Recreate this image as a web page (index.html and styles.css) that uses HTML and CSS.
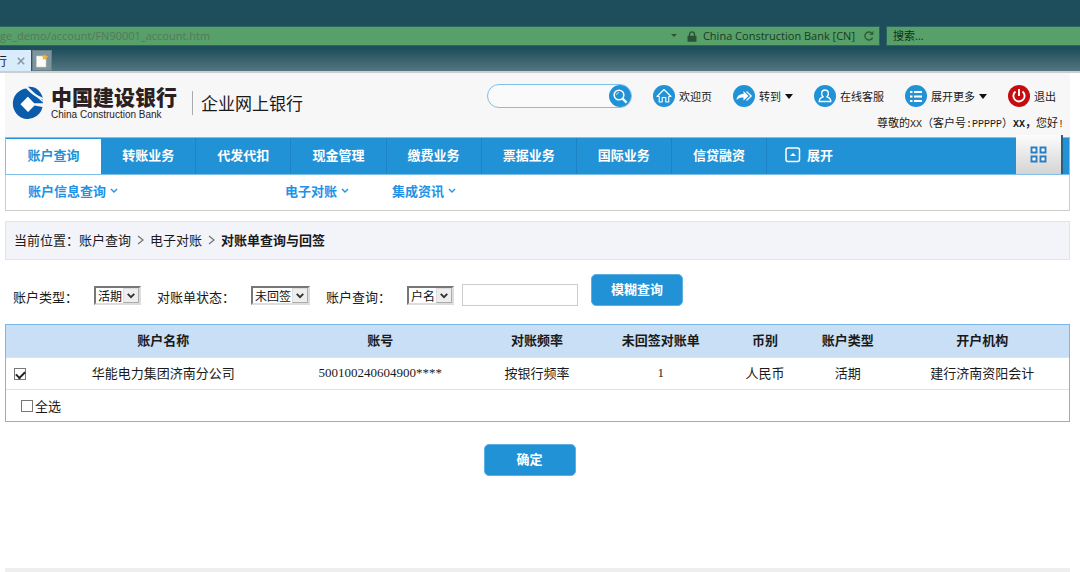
FILE: index.html
```html
<!DOCTYPE html>
<html lang="zh-CN">
<head>
<meta charset="utf-8">
<title>对账单查询与回签</title>
<link rel="stylesheet" href="styles.css">
</head>
<body>
<div class="browser">
  <div class="address-row">
    <div class="address">
      <span class="url">ge_demo/account/FN90001_account.htm</span>
      <svg class="drop" viewBox="0 0 6 4" width="6" height="4" aria-hidden="true"><path d="M0 0h6L3 3z"/></svg>
      <svg class="lock" viewBox="0 0 10 11" width="10" height="11" aria-hidden="true"><path d="M2.5 5V3.4a2.5 2.5 0 0 1 5 0V5" fill="none" stroke-width="1.4"/><rect x="0.5" y="4.8" width="9" height="6" rx="0.6" stroke="none"/></svg>
      <span class="owner">China Construction Bank [CN]</span>
      <svg class="reload" viewBox="0 0 12 12" width="12" height="12" aria-hidden="true"><path d="M9.6 7.6A4 4 0 1 1 8.6 3" fill="none" stroke-width="1.5"/><path d="M10.4 0.8v4.2H6.4z" stroke="none"/></svg>
    </div>
    <div class="finder">搜索...</div>
  </div>
  <div class="tab-row">
    <div class="tab"><span>行</span>
      <svg viewBox="0 0 8 8" width="8" height="8" aria-hidden="true"><path d="M0.8 0.8l6.4 6.4M7.2 0.8L0.8 7.2" fill="none" stroke="#8a959e" stroke-width="1.5"/></svg>
    </div>
    <button class="new-tab" type="button" aria-label="新建选项卡">
      <svg viewBox="0 0 14 14" width="14" height="14" aria-hidden="true"><path d="M1.5 2h8L11 4.500V13H1.500z" fill="#fbfbf9" stroke="#d5d2cb" stroke-width="0.6"/><path d="M10 0l1 2 2.300.6-2 1.400.1 2.300-1.900-1.300-2 .8.7-2.200L7 1.800l2.200 0z" fill="#f5b52e"/></svg>
    </button>
  </div>
</div>

<div class="page">
  <header class="header">
    <div class="brand">
      <svg class="logo" viewBox="0 0 32 34" width="32" height="34" aria-hidden="true">
        <path d="M14 2.500A15 15.300 0 1 0 30.500 21L22.500 19.500 16 26 8.500 18.200 16 10.500 18.500 13 23 11.500z" fill="#0a5cab"/>
        <path d="M15.500 1C21 0 28 2.500 30.800 11.800C25 9.500 19 5.500 15.500 1z" fill="#0a5cab"/>
        <path d="M14 2.600C18 7.500 24 11.500 30.800 13.800V17.200H21.800L16 11z" fill="#0a5cab"/>
        <path d="M16 11l7 7.200-7 7.200-7-7.200z" fill="#fff"/>
        <path d="M15.500 1.200C19.500 5.500 25 10 30.800 15.500" fill="none" stroke="#f7f7f7" stroke-width="1.300"/>
      </svg>
      <div class="brand-name"><strong>中国建设银行</strong><span>China Construction Bank</span></div>
      <div class="product">企业网上银行</div>
    </div>
    <div class="tools">
      <div class="tool-row">
        <form class="search">
          <input type="text" aria-label="搜索">
          <button type="button" aria-label="搜索">
            <svg viewBox="0 0 22 22" width="22" height="22" aria-hidden="true"><circle cx="10" cy="10" r="4.800" fill="none" stroke="#fff" stroke-width="1.600"/><path d="M13.600 13.600l4 4" stroke="#fff" stroke-width="2.200"/><path d="M7.500 10A2.600 2.600 0 0 1 10 7.500" fill="none" stroke="#b9def6"/></svg>
          </button>
        </form>
        <a href="#"><svg viewBox="0 0 22 22" width="22" height="22" aria-hidden="true"><circle cx="11" cy="11" r="11" fill="#2292d6"/><path d="M4 11.500L11 4.500l7 7h-2.200V17h-3v-4.500H9.200V17h-3v-5.500z" fill="none" stroke="#fff" stroke-width="1.100" stroke-linejoin="round"/></svg>欢迎页</a>
        <a href="#"><svg viewBox="0 0 22 22" width="22" height="22" aria-hidden="true"><circle cx="11" cy="11" r="11" fill="#2292d6"/><path d="M3.500 15c.5-4 3-6 7-6V6l5 5-5 4.500V12.500c-3 0-5 .5-7 2.500z" fill="#fff"/><path d="M13.500 6.500L18.200 11l-4.700 4.500" fill="none" stroke="#fff" stroke-width="1.300"/></svg>转到<i class="caret"></i></a>
        <a href="#"><svg viewBox="0 0 22 22" width="22" height="22" aria-hidden="true"><circle cx="11" cy="11" r="11" fill="#2292d6"/><path d="M9 11.800C6.500 9 7.500 5 11 5s4.500 4 2 6.800c2.500.8 3.800 2 3.800 4.700H5.200c0-2.700 1.300-3.900 3.800-4.700z" fill="none" stroke="#fff" stroke-width="1.300"/></svg>在线客服</a>
        <a href="#"><svg viewBox="0 0 22 22" width="22" height="22" aria-hidden="true"><circle cx="11" cy="11" r="11" fill="#2292d6"/><path d="M5 7h2.500M5 11.500h2.500M5 16h2.500M9 7h8M9 11.500h8M9 16h8" stroke="#fff" stroke-width="2.200"/></svg>展开更多<i class="caret"></i></a>
        <a href="#"><svg viewBox="0 0 22 22" width="22" height="22" aria-hidden="true"><circle cx="11" cy="11" r="11" fill="#c40c10"/><path d="M7.500 6.500a5.600 5.600 0 1 0 7 0M11 4v7" fill="none" stroke="#fff" stroke-width="1.900"/></svg>退出</a>
      </div>
      <div class="greeting">尊敬的<span class="mono">XX</span>（客户号<span class="mono">:PPPPP</span>）<b><span class="mono">XX</span>，</b>您好<span class="mono">!</span></div>
    </div>
  </header>

  <nav class="nav">
    <div class="nav-main">
      <div class="nav-tabs">
        <a class="active" href="#">账户查询</a><a href="#">转账业务</a><a href="#">代发代扣</a><a href="#">现金管理</a><a href="#">缴费业务</a><a href="#">票据业务</a><a href="#">国际业务</a><a href="#">信贷融资</a>
      </div>
      <a class="expand" href="#"><svg viewBox="0 0 16 16" width="16" height="16" aria-hidden="true"><rect x="1" y="1" width="13.500" height="13.500" rx="2" fill="none" stroke="#fff" stroke-width="1.500"/><path d="M5 9h6L8 6z" fill="#fff"/></svg>展开</a>
      <button class="apps" type="button" aria-label="全部应用">
        <svg viewBox="0 0 17 17" width="17" height="17" aria-hidden="true"><path d="M1.500 1.500h5v5h-5zM10.500 1.500h5v5h-5zM1.500 10.500h5v5h-5zM10.500 10.500h5v5h-5z" fill="#fff" stroke="#2a7dc0" stroke-width="1.900"/></svg>
      </button>
    </div>
    <div class="nav-sub">
      <a class="wide" href="#">账户信息查询<svg viewBox="0 0 8 6" width="8" height="6" aria-hidden="true"><path d="M1 1l3 3 3-3"/></svg></a>
      <a href="#">电子对账<svg viewBox="0 0 8 6" width="8" height="6" aria-hidden="true"><path d="M1 1l3 3 3-3"/></svg></a>
      <a href="#">集成资讯<svg viewBox="0 0 8 6" width="8" height="6" aria-hidden="true"><path d="M1 1l3 3 3-3"/></svg></a>
    </div>
  </nav>

  <div class="crumbs">
    <span>当前位置：</span><span>账户查询</span>
    <svg viewBox="0 0 7 10" width="7" height="10" aria-hidden="true"><path d="M1 1l5 4-5 4"/></svg>
    <span>电子对账</span>
    <svg viewBox="0 0 7 10" width="7" height="10" aria-hidden="true"><path d="M1 1l5 4-5 4"/></svg>
    <b>对账单查询与回签</b>
  </div>

  <form class="filters">
    <label for="type">账户类型：</label>
    <span class="pick"><select id="type"><option>活期</option></select><svg viewBox="0 0 16 16" width="16" height="16" aria-hidden="true"><path d="M4 6l4 4 4-4"/></svg></span>
    <label for="state">对账单状态：</label>
    <span class="pick pick-wide"><select id="state"><option>未回签</option></select><svg viewBox="0 0 16 16" width="16" height="16" aria-hidden="true"><path d="M4 6l4 4 4-4"/></svg></span>
    <label for="field">账户查询：</label>
    <span class="pair">
      <span class="pick"><select id="field"><option>户名</option></select><svg viewBox="0 0 16 16" width="16" height="16" aria-hidden="true"><path d="M4 6l4 4 4-4"/></svg></span>
      <input class="keyword" type="text" aria-label="查询内容">
    </span>
    <button class="button" type="button">模糊查询</button>
  </form>

  <table class="grid">
    <colgroup><col class="c-check"><col class="c-name"><col class="c-no"><col class="c-freq"><col class="c-open"><col class="c-cur"><col class="c-type"><col class="c-org"></colgroup>
    <thead><tr><th></th><th>账户名称</th><th>账号</th><th>对账频率</th><th>未回签对账单</th><th>币别</th><th>账户类型</th><th>开户机构</th></tr></thead>
    <tbody>
      <tr><td class="pickcell"><input type="checkbox" checked aria-label="选择账户"></td><td>华能电力集团济南分公司</td><td class="num">500100240604900****</td><td>按银行频率</td><td class="num">1</td><td>人民币</td><td>活期</td><td>建行济南资阳会计</td></tr>
      <tr><td class="all" colspan="8"><label><input type="checkbox">全选</label></td></tr>
    </tbody>
  </table>

  <div class="actions"><button class="button" type="button">确定</button></div>
  <footer class="footer"></footer>
</div>
</body>
</html>
```
FILE: styles.css
```css
* { box-sizing: border-box; }
body {
  margin: 0;
  background: #fff;
  color: #1a1a1a;
  font: 13px/18px "Noto Sans CJK SC", sans-serif;
}
a { color: inherit; text-decoration: none; }
svg { display: block; flex: none; }
button, input, select { margin: 0; font: inherit; }

/* browser frame */
.browser {
  padding-top: 26px;
  background: #1e4e5c;
  border-bottom: 2px solid #c9cfd0;
}
.address-row { display: flex; gap: 6px; }
.address, .finder {
  display: flex;
  align-items: center;
  height: 20px;
  background: #58a069;
  border: 1px solid #2d6560;
  font: 11px/18px "Open Sans", "Noto Sans CJK SC", sans-serif;
}
.address { flex: 1; border-left: 0; padding-right: 4px; }
.finder { width: 194px; border-right: 0; padding-left: 6px; color: #12301c; }
.url { flex: 1; color: #53795c; }
.drop { fill: #2a5435; margin-right: 10px; }
.lock { fill: #2b5236; stroke: #2b5236; margin-right: 6px; }
.owner { color: #1a3a24; }
.reload { fill: #2b6039; stroke: #2b6039; margin-left: 8px; }
.tab-row {
  display: flex;
  height: 25px;
  padding-top: 4px;
  background: linear-gradient(#1e4e5c 10%, #54767f);
}
.tab {
  display: flex;
  align-items: center;
  justify-content: space-between;
  width: 32px;
  padding-right: 6px;
  background: #d9ecfb;
  border-right: 1px solid #2d5560;
  font-size: 12px;
}
.tab span { display: flex; justify-content: flex-end; width: 7px; overflow: hidden; }
.new-tab {
  display: flex;
  align-items: center;
  justify-content: center;
  width: 20px;
  padding: 0;
  background: #80949b;
  border: 1px solid #64808a;
}

/* page */
.page { margin: 0 10px 0 5px; }
.header {
  display: flex;
  justify-content: space-between;
  height: 64px;
  padding-left: 7px;
  background: #f7f7f7;
}
.brand { display: flex; align-items: center; height: 60px; }
.brand-name {
  display: flex;
  flex-direction: column;
  gap: 2px;
  width: 134px;
  margin: 0 7px 0 7px;
  color: #2b2021;
}
.brand-name strong { font-size: 21px; line-height: 21px; font-weight: 900; }
.brand-name span { font: 10px/12px "Liberation Sans", sans-serif; }
.product {
  padding-left: 8px;
  border-left: 1px solid #aaa;
  font-size: 17px;
  line-height: 24px;
}
.tools { font-size: 11px; line-height: 16px; text-align: right; }
.tool-row {
  display: flex;
  align-items: center;
  gap: 21px;
  padding: 11px 14px 0 0;
}
.tool-row a { display: flex; align-items: center; gap: 4px; }
.caret {
  border: 4px solid transparent;
  border-top: 5px solid #111;
  border-bottom: 0;
}
.search {
  display: flex;
  width: 145px;
  height: 24px;
  background: #fafafa;
  border: 1px solid #7cc0eb;
  border-radius: 12px;
}
.search input {
  flex: 1;
  min-width: 0;
  padding: 0 10px;
  background: none;
  border: 0;
}
.search button {
  display: flex;
  padding: 0;
  background: #2292d6;
  border: 0;
  border-radius: 50%;
}
.greeting { padding: 6px 6px 0 0; }
.mono { font-family: "Liberation Mono", monospace; font-size: 10px; }

/* navigation */
.nav { border: 1px solid #ccc; border-top: 0; }
.nav-main {
  display: flex;
  height: 38px;
  margin: 0 -1px;
  padding-right: 6px;
  background: #2292d6;
  border: 1px solid #7fc0ea;
  color: #fff;
  font-weight: bold;
}
.nav-tabs { display: grid; grid-template-columns: repeat(8, 1fr); width: 72%; }
.nav-tabs a {
  display: flex;
  align-items: center;
  justify-content: center;
  padding-bottom: 3px;
  border-right: 1px solid #1c83c4;
}
.nav-tabs .active {
  background: #fff;
  border: 0;
  border-top: 1px solid #2292d6;
  color: #2292d6;
}
.expand { display: flex; align-items: center; gap: 6px; padding: 0 0 3px 18px; }
.apps {
  display: flex;
  align-items: center;
  justify-content: center;
  width: 47px;
  margin: -3px 0 0 auto;
  padding: 0;
  background: linear-gradient(#fcfcfc, #d4d4d4);
  border: 0;
  border-right: 2px solid #2b5f7d;
}
.nav-sub {
  display: flex;
  gap: 43px;
  height: 35px;
  padding: 7px 22px 0;
  color: #2292e6;
  font-weight: bold;
}
.nav-sub a { display: flex; gap: 4px; height: 18px; align-items: center; }
.nav-sub .wide { width: 214px; }
.nav-sub path, .crumbs path, .pick path { fill: none; stroke: currentColor; stroke-width: 1.4; }

.crumbs {
  display: flex;
  align-items: center;
  height: 39px;
  margin-top: 10px;
  padding: 0 0 2px 8px;
  background: #f2f4fa;
  border: 1px solid #e2e2f0;
}
.crumbs svg { margin: 0 6px; color: #777; }

.filters {
  display: flex;
  align-items: flex-end;
  gap: 16px;
  margin-top: 14px;
  padding-left: 8px;
}
.pick { position: relative; width: 47px; height: 20px; }
.pick-wide { width: 59px; }
.pick select {
  display: block;
  width: 100%;
  height: 19px;
  padding: 0 0 0 2px;
  appearance: none;
  background: #fff;
  border: 2px solid #ddd;
  border-top-color: #777;
  border-left-color: #777;
  border-radius: 0;
  color: #111;
  font-size: 12px;
  line-height: 14px;
}
.pick svg {
  position: absolute;
  top: 2px;
  right: 2px;
  height: 15px;
  background: #eee;
  border: 1px solid #aaa;
  border-top-color: #ddd;
  border-left-color: #ddd;
  pointer-events: none;
}
.pick path { stroke-width: 2.4; color: #333; }
.pair { display: flex; align-items: flex-end; gap: 8px; }
.keyword { width: 116px; height: 22px; border: 1px solid #ccc; }
.filters .button { margin-left: -3px; }
.button {
  width: 92px;
  height: 32px;
  padding: 0 0 3px;
  background: #2292d6;
  border: 1px solid #5fb0e2;
  border-radius: 5px;
  color: #fff;
  font-weight: bold;
}

/* account table */
.grid {
  width: 100%;
  margin-top: 18px;
  table-layout: fixed;
  border-collapse: separate;
  border-spacing: 0;
  border: 1px solid #7ab6ea;
}
.grid th, .grid td { height: 32px; padding: 0 0 2px; text-align: center; }
.grid thead { background: #c8dff5; }
.grid td { border-top: 1px solid #e2e2e2; }
.grid .num { font-family: "Liberation Serif", serif; }
.grid input {
  display: block;
  width: 12px;
  height: 12px;
  appearance: none;
  background: #fff;
  border: 1px solid #777;
}
.grid input:checked::before {
  content: "";
  display: block;
  width: 7px;
  height: 4px;
  margin: 2px 0 0 1px;
  border: solid #222;
  border-width: 0 0 2px 2px;
  transform: rotate(-45deg);
}
.grid .pickcell { padding: 0 0 0 8px; }
.grid .all { padding: 0 0 0 15px; }
.all label { display: flex; align-items: center; gap: 2px; }
.c-check { width: 4%; }
.c-name { width: 21.6%; }
.c-no { width: 19.2%; }
.c-freq { width: 10.3%; }
.c-open { width: 13%; }
.c-cur { width: 6.6%; }
.c-type { width: 9%; }
.c-org { width: 16.3%; }

.actions { margin: 22px 16px 0 0; text-align: center; }
.actions .button { display: block; margin: 0 auto; }
.footer { height: 4px; margin-top: 92px; background: #eee; }
```
